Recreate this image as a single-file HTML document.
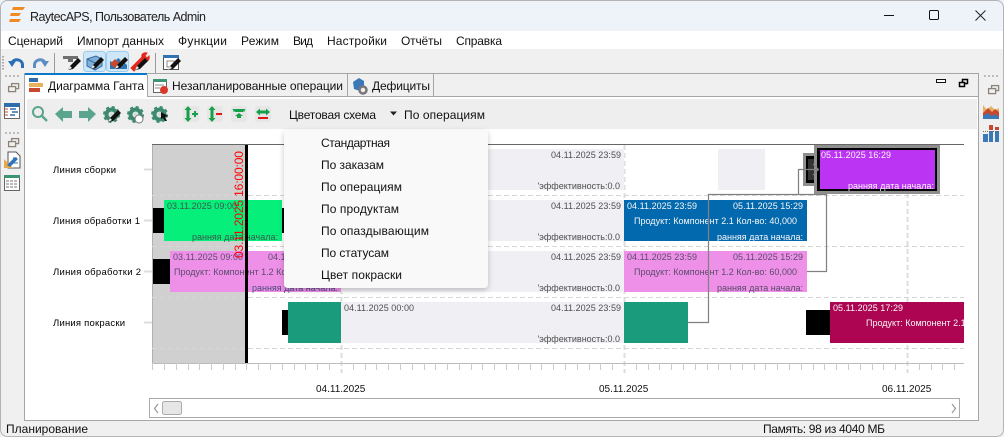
<!DOCTYPE html>
<html><head><meta charset="utf-8"><title>RaytecAPS</title>
<style>
html,body{margin:0;padding:0;background:#fff;width:1004px;height:437px;overflow:hidden}
svg{display:block}
text{font-family:"Liberation Sans","DejaVu Sans",sans-serif;white-space:pre}
.m{font-size:12px;fill:#111}
.c{font-size:9px}
.g{fill:#4f4f4f}
.w{fill:#f6f6f6}
.l{font-size:9.5px;fill:#000}
</style></head><body>
<svg width="1004" height="437" viewBox="0 0 1004 437" xmlns="http://www.w3.org/2000/svg">
<defs>
<g id="pen"><path d="M0 12 L2 8 L10 0 L13 3 L5 11 Z" fill="#111"/><path d="M0 12 L2 8 L4 10 Z" fill="#eee"/></g>
<g id="gear"><circle cx="8.5" cy="8.5" r="5" fill="none" stroke="#3d8a70" stroke-width="4"/><circle cx="8.5" cy="8.5" r="7.3" fill="none" stroke="#3d8a70" stroke-width="2.4" stroke-dasharray="3 2.73"/><circle cx="8.5" cy="8.5" r="2.2" fill="#cfe0d9"/></g>
<g id="rest" fill="none" stroke="#8c8478" stroke-width="1.3"><rect x="3.6" y=".6" width="7" height="5"/><rect x=".6" y="3.6" width="7" height="5" fill="#f0f0f0"/></g>
<filter id="sh" x="-10%" y="-10%" width="120%" height="125%"><feDropShadow dx="0" dy="2" stdDeviation="3" flood-color="#000" flood-opacity=".22"/></filter>
<clipPath id="chart"><rect x="152" y="145" width="812" height="218"/></clipPath>
</defs>

<!-- window -->
<rect width="1004" height="437" fill="#f0f0f0"/>
<rect width="1004" height="31" fill="#eef2f9"/>
<rect y="31" width="1004" height="18" fill="#fff"/>
<rect x=".5" y=".5" width="1003" height="436" rx="7" fill="none" stroke="#b4b4b4"/>

<!-- title -->
<path d="M13 7h12l-2 3H12ZM11 13h10l-2 3H10ZM10 19h11l-2 3H9Z" fill="#f08a24"/>
<text x="30" y="21" font-size="12.5" fill="#222" textLength="176">RaytecAPS, Пользователь Admin</text>
<path d="M884 15.5h10" stroke="#111" stroke-width="1"/>
<rect x="929.5" y="10.5" width="9" height="9" rx="1.2" fill="none" stroke="#111"/>
<path d="M975.5 10.5l10 10M985.5 10.5l-10 10" stroke="#222" fill="none"/>

<!-- menu -->
<g class="m">
<text x="8" y="45" textLength="55">Сценарий</text>
<text x="77" y="45" textLength="87">Импорт данных</text>
<text x="178" y="45" textLength="49">Функции</text>
<text x="241" y="45" textLength="38">Режим</text>
<text x="293" y="45" textLength="20">Вид</text>
<text x="327" y="45" textLength="60">Настройки</text>
<text x="401" y="45" textLength="41">Отчёты</text>
<text x="456" y="45" textLength="46">Справка</text>
</g>

<!-- main toolbar -->
<path d="M3 56v14" stroke="#aaa" stroke-width="2" stroke-dasharray="1.5 1.5"/>
<path d="M22.500 68v-3c0-6-9-7-10.500-2" fill="none" stroke="#2a6fb5" stroke-width="3"/>
<path d="M8 61h8l-4 6z" fill="#2a6fb5"/>
<path d="M34.500 68v-3c0-6 9-7 10.500-2" fill="none" stroke="#5c8ec4" stroke-width="3"/>
<path d="M49 61h-8l4 6z" fill="#5c8ec4"/>
<path d="M54.500 53v20M155.500 53v20" stroke="#9a9a9a"/>
<path d="M63 56h15v3h-5v3h-5v-3h-5z" fill="#6f6f6f"/><use href="#pen" x="68" y="58"/>
<rect x="83.500" y="51.500" width="22" height="20" rx="3" fill="#cde6f8" stroke="#99cdf0"/>
<rect x="106.500" y="51.500" width="22" height="20" rx="3" fill="#cde6f8" stroke="#99cdf0"/>
<path d="M87 59l9-3 6 3v7l-7 4-8-4z" fill="#7fb0da" stroke="#33699f"/><path d="M87 59l8 4 7-4M95 63v7" fill="none" stroke="#33699f"/><use href="#pen" x="91" y="57"/>
<path d="M110 69v-8l4 2 4-5 4 3 5 4v4z" fill="#2f73b0"/><path d="M110 64l5-5 5 5-5 4z" fill="#c8472f"/><path d="M120 60l4 2v3l-4-1z" fill="#e0aa50"/><use href="#pen" x="115" y="57"/>
<path d="M131 68l11-11c-1-3 2-5 5-4l-2 3 2 2 2-2c1 4-2 6-5 5l-10 10z" fill="#e02a20" stroke="#e02a20"/><use href="#pen" x="135" y="58"/>
<rect x="163.500" y="55.500" width="15" height="14" fill="#fff" stroke="#555"/><rect x="163" y="55" width="16" height="3" fill="#2f73b0"/><rect x="167" y="61" width="7" height="6" fill="none" stroke="#888"/><use href="#pen" x="168" y="58"/>

<!-- left sidebar -->
<path d="M5 76h14M5 133h14" stroke="#aaa" stroke-width="1.500" stroke-dasharray="2 2"/>
<use href="#rest" x="8" y="83"/><use href="#rest" x="8" y="138"/>
<rect x="4.500" y="103.500" width="15" height="15" fill="#fff" stroke="#666"/><rect x="4" y="103" width="16" height="4" fill="#2f6ea8"/>
<path d="M5 109h3M5 112h3M5 115h3" stroke="#c8472f"/><path d="M10 109h6M12 112h6M10 115h5" stroke="#2f6ea8" stroke-width="1.500"/>
<path d="M8 152h8l4 4v12H8z" fill="#fff" stroke="#555"/><path d="M4 168v-9l9 9z" fill="#eaa84a"/><path d="M7 165l8-8 3 2-8 8z" fill="#2f73b8"/><path d="M13 158h4M14 163h4" stroke="#2f73b8"/>
<rect x="4.500" y="175.500" width="15" height="15" fill="#fff" stroke="#666"/><rect x="4" y="175" width="16" height="3" fill="#3c9470"/>
<path d="M6 181h12M6 184h12M6 187h12" stroke="#777" stroke-dasharray="3 1"/>

<!-- right sidebar -->
<path d="M984 76h14" stroke="#aaa" stroke-width="1.500" stroke-dasharray="2 2"/>
<use href="#rest" x="988" y="85"/>
<path d="M983 119v-14l4 5 4-4 4 4 4-2v11z" fill="#e8b25c"/><path d="M983 113l5-5 4 4 3-3 4 3v7h-16z" fill="#c8472f"/><path d="M983 119v-3l5-3 4 3 3-2 4 3v2z" fill="#3a78b8"/>
<rect x="983" y="134" width="5" height="8" fill="#3a78b8"/><rect x="989" y="131" width="4" height="11" fill="#3a78b8"/><rect x="995" y="131" width="4" height="11" fill="#3a78b8"/>
<rect x="989" y="125" width="4" height="5" fill="#c8472f"/><rect x="995" y="127" width="4" height="3" fill="#c8472f"/>
<path d="M983 131.500h16" stroke="#666" stroke-dasharray="1 1"/>

<!-- panel -->
<rect x="24.500" y="73.500" width="954" height="347" fill="#fff" stroke="#a6a6a6"/>
<rect x="25" y="74" width="953" height="22" fill="#f0f0f0"/>
<path d="M25 96.500h953" stroke="#a6a6a6"/>
<rect x="25" y="74" width="122" height="24" fill="#fff"/>
<rect x="25" y="73" width="122" height="2" fill="#0b78c8"/>
<path d="M147.500 75v22M347.500 74v22M433.500 74v22" stroke="#a6a6a6"/>
<rect x="29" y="78" width="9" height="4" fill="#2f6ea8"/><rect x="29" y="83" width="14" height="4" fill="#e8b25c"/><rect x="29" y="88" width="11" height="4" fill="#c8472f"/>
<text x="48" y="90" font-size="12" fill="#111" textLength="96">Диаграмма Ганта</text>
<rect x="153.500" y="79.500" width="13" height="13" fill="#fff" stroke="#666"/><rect x="153" y="79" width="14" height="3" fill="#3c9470"/><path d="M155 85h9M155 88h5" stroke="#888"/><circle cx="164" cy="90" r="4" fill="#d83a2a"/>
<text x="172" y="90" font-size="12" fill="#111" textLength="171">Незапланированные операции</text>
<path d="M353 82l6-4 5 3v5l-4 5-6-2z" fill="#3a78b8"/><circle cx="363" cy="90" r="3.500" fill="#eee" stroke="#777" stroke-width="2.500"/>
<text x="372" y="90" font-size="12" fill="#111" textLength="58">Дефициты</text>
<rect x="936.500" y="79.500" width="9" height="3" fill="#fff" stroke="#111"/>
<g fill="none" stroke="#000"><rect x="962.500" y="79.500" width="5" height="4" stroke-width="1.500"/><rect x="959.500" y="82.500" width="5" height="4" fill="#f0f0f0" stroke-width="1.500"/></g>

<!-- gantt toolbar -->
<rect x="27" y="99" width="950" height="30" fill="#eee"/>
<circle cx="38" cy="112" r="5" fill="none" stroke="#5aa58d" stroke-width="2"/><path d="M42 116l5 5" stroke="#5aa58d" stroke-width="2.500"/>
<path d="M55 114l8-7v4h9v7h-9v4z" fill="#5aa58d"/>
<path d="M96 114l-8-7v4h-9v7h9v4z" fill="#5aa58d"/>
<use href="#gear" x="103" y="106"/><use href="#pen" x="108" y="110"/>
<use href="#gear" x="127" y="106"/><circle cx="139" cy="119" r="4" fill="#fff" stroke="#777"/>
<use href="#gear" x="151" y="106"/><path d="M161 112l7 4-3 1 2 4-2 0-2-3-2 1z" fill="#111"/>
<g fill="#e6e6e6"><rect x="183" y="106" width="16" height="16" rx="2"/><rect x="207" y="106" width="16" height="16" rx="2"/><rect x="231" y="106" width="16" height="16" rx="2"/><rect x="255" y="106" width="16" height="16" rx="2"/></g>
<path d="M188 106l3.500 4h-2v8h2l-3.500 4-3.500-4h2v-8h-2z" fill="#17a04a"/><path d="M192 114h6M195 111v6" stroke="#17a04a" stroke-width="2"/>
<path d="M212 106l3.500 4h-2v8h2l-3.500 4-3.500-4h2v-8h-2z" fill="#17a04a"/><path d="M216 114h6" stroke="#e01818" stroke-width="2"/>
<path d="M232 109h14l-3 2v1h-8v-1zM239 113l4 3h-2v2h-4v-2h-2z" fill="#17a04a"/><path d="M233 111h12" stroke="#17a04a"/>
<path d="M256 112l4-3.500v2h6v-2l4 3.500-4 3.500v-2h-6v2z" fill="#17a04a"/><path d="M258 118h10" stroke="#e01818" stroke-width="2"/>
<text x="289" y="119" font-size="12" fill="#111" textLength="87">Цветовая схема</text>
<path d="M390 111.500h7l-3.500 4z" fill="#222"/>
<text x="404" y="119" font-size="12" fill="#111" textLength="81">По операциям</text>

<!-- row labels -->
<g class="l">
<text x="53" y="173" textLength="63">Линия сборки</text>
<text x="53" y="224" textLength="87">Линия обработки 1</text>
<text x="53" y="275" textLength="88">Линия обработки 2</text>
<text x="53" y="326" textLength="72">Линия покраски</text>
</g>
<path d="M144 169.500h8M144 220.500h8M144 271.500h8M144 322.500h8" stroke="#ddd" stroke-width="2"/>

<!-- chart bg -->
<rect x="152" y="145" width="94" height="218" fill="#d0d0d0"/>
<path d="M152.500 145v218" stroke="#b0b0b0"/>
<path d="M341.500 145v228M624.500 145v228M907.500 145v228" stroke="#ddd" stroke-width="2" stroke-dasharray="5 3"/>
<path d="M152 195.500h812M152 246.500h812M152 297.500h812M152 348.500h812" stroke="#d6d6d6" stroke-dasharray="5 3"/>
<path d="M152 144.500h812" stroke="#666"/>
<path d="M152 363.500h812" stroke="#bbb"/>
<path d="M152.500 363v7M164.500 363v7M176.500 363v7M188.500 363v7M199.500 363v7M211.500 363v7M223.500 363v7M235.500 363v7M246.500 363v7M258.500 363v7M270.500 363v7M282.500 363v7M294.500 363v7M305.500 363v7M317.500 363v7M329.500 363v7M353.500 363v7M365.500 363v7M376.500 363v7M388.500 363v7M400.500 363v7M412.500 363v7M424.500 363v7M435.500 363v7M447.500 363v7M459.500 363v7M471.500 363v7M482.500 363v7M494.500 363v7M506.500 363v7M518.500 363v7M530.500 363v7M541.500 363v7M553.500 363v7M565.500 363v7M577.500 363v7M589.500 363v7M600.500 363v7M612.500 363v7M636.500 363v7M648.500 363v7M659.500 363v7M671.500 363v7M683.500 363v7M695.500 363v7M707.500 363v7M718.500 363v7M730.500 363v7M742.500 363v7M754.500 363v7M765.500 363v7M777.500 363v7M789.500 363v7M801.500 363v7M813.500 363v7M824.500 363v7M836.500 363v7M848.500 363v7M860.500 363v7M872.500 363v7M883.500 363v7M895.500 363v7M919.500 363v7M931.500 363v7M942.500 363v7M954.500 363v7" stroke="#ccc"/>

<!-- lavender bars -->
<g fill="#efeff4">
<rect x="341" y="149" width="283" height="41"/><rect x="718" y="149" width="47" height="41"/>
<rect x="341" y="200" width="283" height="41"/><rect x="341" y="251" width="283" height="41"/><rect x="341" y="302" width="283" height="41"/>
</g>
<g class="c g">
<text x="621" y="158" text-anchor="end" textLength="70">04.11.2025 23:59</text><text x="620" y="189" text-anchor="end">'эффективность:0.0</text>
<text x="621" y="209" text-anchor="end" textLength="70">04.11.2025 23:59</text><text x="620" y="240" text-anchor="end">'эффективность:0.0</text>
<text x="621" y="260" text-anchor="end" textLength="70">04.11.2025 23:59</text><text x="620" y="291" text-anchor="end">'эффективность:0.0</text>
<text x="344" y="311" textLength="70">04.11.2025 00:00</text><text x="621" y="311" text-anchor="end" textLength="70">04.11.2025 23:59</text><text x="620" y="342" text-anchor="end">'эффективность:0.0</text>
</g>

<!-- setups -->
<rect x="153" y="208" width="11" height="25" fill="#000"/>
<rect x="153" y="259" width="17" height="25" fill="#000"/>
<rect x="282" y="310" width="6" height="25" fill="#000"/>
<rect x="282" y="208" width="6" height="25" fill="#000"/>
<rect x="806" y="310" width="24" height="25" fill="#000"/>

<!-- bars -->
<rect x="164" y="200" width="118" height="41" fill="#05ef7a"/>
<rect x="170" y="251" width="171" height="41" fill="#ee90e8"/>
<rect x="288" y="302" width="53" height="41" fill="#1a9b7c"/>
<rect x="624" y="200" width="183" height="41" fill="#0369ae"/>
<rect x="624" y="251" width="183" height="41" fill="#ee90e8"/>
<rect x="624" y="302" width="64" height="41" fill="#1a9b7c"/>
<rect x="830" y="302" width="134" height="41" fill="#ae0553"/>

<g class="c">
<text x="167" y="209" fill="#3d5a4a" textLength="70">03.11.2025 09:00</text>
<text x="278" y="240" text-anchor="end" fill="#3d5a4a">ранняя дата начала:</text>
<text x="173" y="260" fill="#5a4a6a" textLength="70">03.11.2025 09:00</text>
<text x="338" y="260" text-anchor="end" fill="#5a4a6a" textLength="70">04.11.2025 23:59</text>
<text x="174" y="275" fill="#5a4a6a">Продукт: Компонент 1.2 Кол-во: 60,000</text>
<text x="338" y="291" text-anchor="end" fill="#4a4a7a">ранняя дата начала:</text>
<text x="627" y="209" class="w" textLength="70">04.11.2025 23:59</text>
<text x="803" y="209" text-anchor="end" class="w" textLength="70">05.11.2025 15:29</text>
<text x="634" y="224" class="w" textLength="163">Продукт: Компонент 2.1 Кол-во: 40,000</text>
<text x="803" y="240" text-anchor="end" class="w">ранняя дата начала:</text>
<text x="627" y="260" fill="#5a4a6a" textLength="70">04.11.2025 23:59</text>
<text x="803" y="260" text-anchor="end" fill="#5a4a6a" textLength="70">05.11.2025 15:29</text>
<text x="634" y="275" fill="#5a4a6a" textLength="163">Продукт: Компонент 1.2 Кол-во: 60,000</text>
<text x="803" y="291" text-anchor="end" fill="#5a4a6a">ранняя дата начала:</text>
<text x="833" y="311" class="w" textLength="70">05.11.2025 17:29</text>
<g clip-path="url(#chart)"><text x="866" y="326" class="w">Продукт: Компонент 2.1 Кол-во: 40,000</text></g>
</g>

<!-- selected purple -->
<rect x="803" y="153" width="12" height="33" fill="#8f8f8f"/>
<rect x="806" y="156" width="12" height="27" fill="#000"/>
<rect x="808" y="159" width="9" height="21" fill="#333"/>
<rect x="814" y="145" width="126" height="49" fill="#8f8f8f"/>
<rect x="817" y="148" width="120" height="43" fill="#000"/>
<rect x="820" y="150" width="115" height="39" fill="#bb33f3"/>
<g class="c">
<text x="821" y="158" class="w" textLength="70">05.11.2025 16:29</text>
<text x="934" y="189" text-anchor="end" class="w">ранняя дата начала:</text>
</g>

<!-- links -->
<path d="M688 322.500h20.500V194.500h90V169.500h20M807 271.500h19.500V194.500h-28" fill="none" stroke="#808080" stroke-width="1.200"/>
<path d="M813 164l5.500 5.500-5.500 5.500" fill="none" stroke="#808080" stroke-width="1.200"/>

<!-- now line -->
<rect x="245" y="145" width="3" height="218" fill="#000"/>
<text transform="translate(243,258) rotate(-90)" font-size="12" fill="#f00" textLength="107">03.11.2025 16:00:00</text>

<!-- axis dates -->
<g font-size="10" fill="#111">
<text x="316" y="392">04.11.2025</text><text x="599" y="392">05.11.2025</text><text x="882" y="392">06.11.2025</text>
</g>

<!-- scrollbar -->
<rect x="149.500" y="398.500" width="810" height="19" fill="#fff" stroke="#aaa"/>
<path d="M158 404l-3.500 4.500 3.500 4.500M952 404l3.500 4.500-3.500 4.500" fill="none" stroke="#999" stroke-width="1.200"/>
<rect x="162.500" y="401.500" width="19" height="13" rx="2" fill="#e6e6e6" stroke="#aaa"/>

<!-- status -->
<text x="6" y="433" font-size="12" fill="#111" textLength="82">Планирование</text>
<text x="763" y="433" font-size="12" fill="#111" textLength="122">Память: 98 из 4040 МБ</text>

<!-- popup -->
<rect x="284" y="130" width="204" height="158" rx="4" fill="#f9f9f9" filter="url(#sh)"/>
<g class="m">
<text x="321" y="147" textLength="69">Стандартная</text>
<text x="321" y="169" textLength="63">По заказам</text>
<text x="321" y="191" textLength="81">По операциям</text>
<text x="321" y="213" textLength="78">По продуктам</text>
<text x="321" y="235" textLength="108">По опаздывающим</text>
<text x="321" y="257" textLength="68">По статусам</text>
<text x="321" y="279" textLength="81">Цвет покраски</text>
</g>
</svg>
</body></html>
